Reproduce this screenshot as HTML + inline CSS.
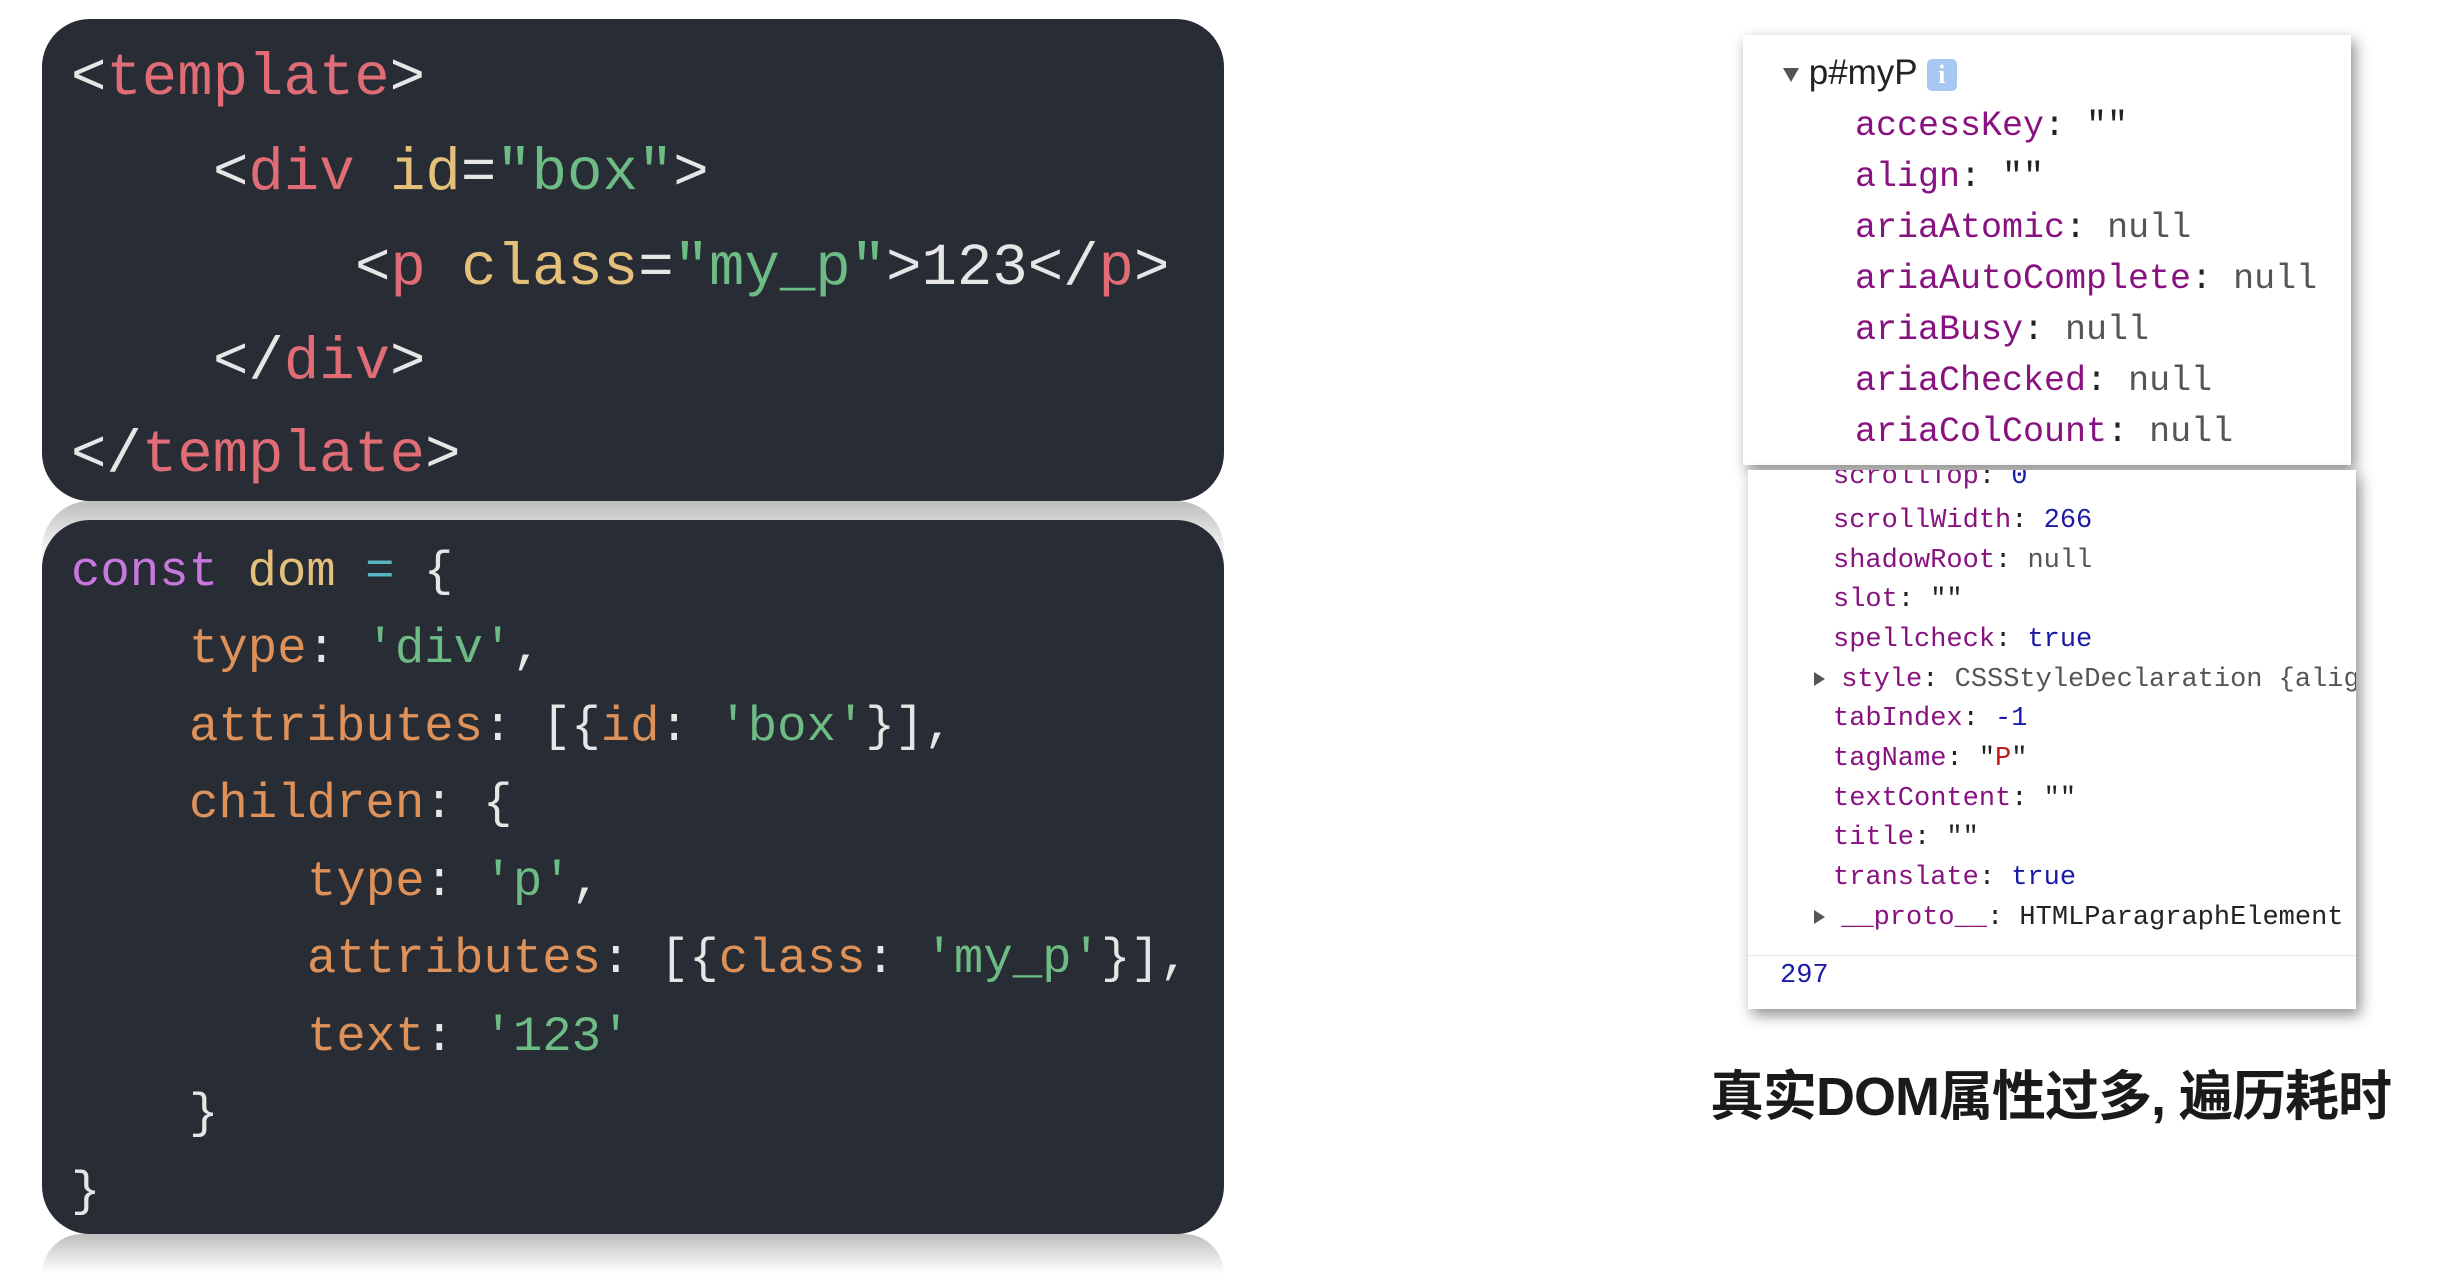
<!DOCTYPE html>
<html><head><meta charset="utf-8"><style>
*{margin:0;padding:0;box-sizing:border-box}
body{width:2458px;height:1254px;background:#fff;position:relative;overflow:hidden;font-family:"Liberation Mono",monospace}
.box{position:absolute;background:#282c34;border-radius:48px;}
.refl{position:absolute;border-radius:48px 48px 0 0;background:linear-gradient(#bdbdbd,#e6e6e6 60%,#fff);}
.l{position:absolute;white-space:pre;line-height:1}
.c1 .l{font-size:59px;letter-spacing:0}
.c2 .l{font-size:49px}
.w{color:#e6e6e6}.r{color:#e06c75}.y{color:#e5c07b}.g{color:#6dbb85}.o{color:#de9158}.p{color:#c678dd}.cy{color:#56b6c2}
.card{position:absolute;background:#fff;box-shadow:4px 6px 14px rgba(0,0,0,.45);overflow:hidden}
.k{color:#881280}.n{color:#555}.b{color:#1a1aa6}.s{color:#c41a16}.d{color:#222}
.c3 .l{font-size:35px}
.c4 .l{font-size:27px}
.tri{display:inline-block;width:0;height:0;border-left:8px solid transparent;border-right:8px solid transparent;border-top:14px solid #555}
.tr{display:inline-block;width:0;height:0;border-top:7px solid transparent;border-bottom:7px solid transparent;border-left:11px solid #555}
</style></head><body>
<div class="box c1" style="left:42px;top:19px;width:1182px;height:482px">
<div class="l" style="left:29px;top:30px"><span class="w">&lt;</span><span class="r">template</span><span class="w">&gt;</span></div>
<div class="l" style="left:171px;top:125px"><span class="w">&lt;</span><span class="r">div</span> <span class="y">id</span><span class="w">=</span><span class="g">"box"</span><span class="w">&gt;</span></div>
<div class="l" style="left:313px;top:220px"><span class="w">&lt;</span><span class="r">p</span> <span class="y">class</span><span class="w">=</span><span class="g">"my_p"</span><span class="w">&gt;123&lt;/</span><span class="r">p</span><span class="w">&gt;</span></div>
<div class="l" style="left:171px;top:314px"><span class="w">&lt;/</span><span class="r">div</span><span class="w">&gt;</span></div>
<div class="l" style="left:29px;top:407px"><span class="w">&lt;/</span><span class="r">template</span><span class="w">&gt;</span></div>
</div>
<div class="refl" style="left:42px;top:501px;width:1182px;height:60px"></div>
<div class="box c2" style="left:42px;top:520px;width:1182px;height:714px">
<div class="l" style="left:29px;top:28px"><span class="p">const</span> <span class="y">dom</span> <span class="cy">=</span> <span class="w">{</span></div>
<div class="l" style="left:147px;top:105px"><span class="o">type</span><span class="w">:</span> <span class="g">'div'</span><span class="w">,</span></div>
<div class="l" style="left:147px;top:183px"><span class="o">attributes</span><span class="w">: [{</span><span class="o">id</span><span class="w">:</span> <span class="g">'box'</span><span class="w">}],</span></div>
<div class="l" style="left:147px;top:260px"><span class="o">children</span><span class="w">: {</span></div>
<div class="l" style="left:265px;top:338px"><span class="o">type</span><span class="w">:</span> <span class="g">'p'</span><span class="w">,</span></div>
<div class="l" style="left:265px;top:415px"><span class="o">attributes</span><span class="w">: [{</span><span class="o">class</span><span class="w">:</span> <span class="g">'my_p'</span><span class="w">}],</span></div>
<div class="l" style="left:265px;top:493px"><span class="o">text</span><span class="w">:</span> <span class="g">'123'</span></div>
<div class="l" style="left:147px;top:570px"><span class="w">}</span></div>
<div class="l" style="left:29px;top:648px"><span class="w">}</span></div>
</div>
<div class="refl" style="left:42px;top:1234px;width:1182px;height:40px"></div>

<div class="card c3" style="left:1743px;top:35px;width:608px;height:430px">
<div class="l" style="left:40px;top:20px;font-family:'Liberation Sans Narrow','Liberation Sans',sans-serif;font-size:35px;color:#222"><span class="tri" style="vertical-align:middle"></span> p#myP <span style="display:inline-block;width:30px;height:32px;background:#a8c8f4;border-radius:5px;color:#fff;font-size:26px;text-align:center;vertical-align:middle;line-height:32px;font-family:'Liberation Serif',serif;font-weight:bold">i</span></div>
<div class="l" style="left:112px;top:74px"><span class="k">accessKey</span><span class="d">: ""</span></div>
<div class="l" style="left:112px;top:125px"><span class="k">align</span><span class="d">: ""</span></div>
<div class="l" style="left:112px;top:176px"><span class="k">ariaAtomic</span><span class="d">: </span><span class="n">null</span></div>
<div class="l" style="left:112px;top:227px"><span class="k">ariaAutoComplete</span><span class="d">: </span><span class="n">null</span></div>
<div class="l" style="left:112px;top:278px"><span class="k">ariaBusy</span><span class="d">: </span><span class="n">null</span></div>
<div class="l" style="left:112px;top:329px"><span class="k">ariaChecked</span><span class="d">: </span><span class="n">null</span></div>
<div class="l" style="left:112px;top:380px"><span class="k">ariaColCount</span><span class="d">: </span><span class="n">null</span></div>
</div>

<div class="card c4" style="left:1748px;top:470px;width:608px;height:539px">
<div class="l" style="left:85px;top:-6px"><span class="k">scrollTop</span><span class="d">: </span><span class="b">0</span></div>
<div class="l" style="left:85px;top:38px"><span class="k">scrollWidth</span><span class="d">: </span><span class="b">266</span></div>
<div class="l" style="left:85px;top:78px"><span class="k">shadowRoot</span><span class="d">: </span><span class="n">null</span></div>
<div class="l" style="left:85px;top:117px"><span class="k">slot</span><span class="d">: ""</span></div>
<div class="l" style="left:85px;top:157px"><span class="k">spellcheck</span><span class="d">: </span><span class="b">true</span></div>
<div class="l" style="left:66px;top:197px"><span class="tr"></span> <span class="k">style</span><span class="d">: </span><span class="n">CSSStyleDeclaration {alig</span></div>
<div class="l" style="left:85px;top:236px"><span class="k">tabIndex</span><span class="d">: </span><span class="b">-1</span></div>
<div class="l" style="left:85px;top:276px"><span class="k">tagName</span><span class="d">: "</span><span class="s">P</span><span class="d">"</span></div>
<div class="l" style="left:85px;top:316px"><span class="k">textContent</span><span class="d">: ""</span></div>
<div class="l" style="left:85px;top:355px"><span class="k">title</span><span class="d">: ""</span></div>
<div class="l" style="left:85px;top:395px"><span class="k">translate</span><span class="d">: </span><span class="b">true</span></div>
<div class="l" style="left:66px;top:435px"><span class="tr"></span> <span class="k">__proto__</span><span class="d">: HTMLParagraphElement</span></div>
<div style="position:absolute;left:0;top:485px;width:608px;height:1px;background:#e8e8e8"></div>
<div class="l" style="left:32px;top:493px"><span class="b">297</span></div>
</div>

<div class="l" style="left:1710px;top:1070px;font-family:'Liberation Sans','Noto Sans CJK SC',sans-serif;font-weight:bold;font-size:54px;color:#1a1a1a;letter-spacing:-1px">真实DOM属性过多, 遍历耗时</div>
</body></html>
